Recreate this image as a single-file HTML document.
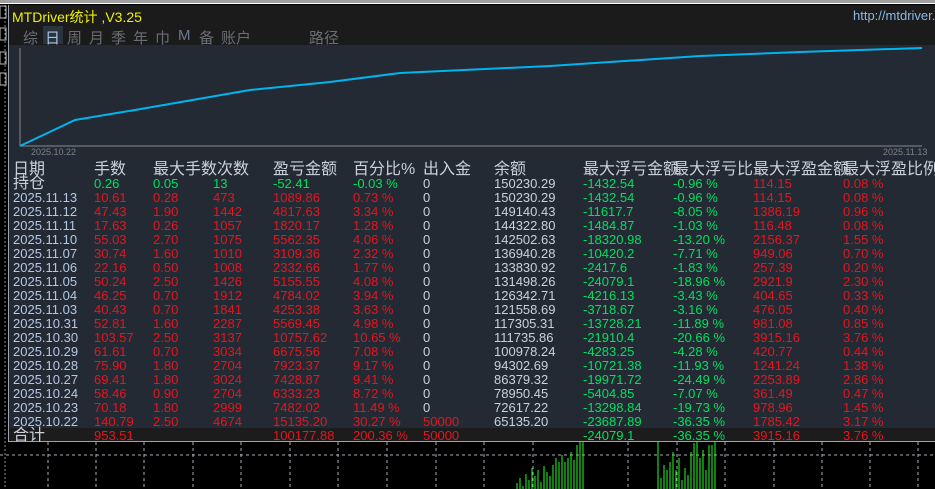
<!DOCTYPE html>
<html><head><meta charset="utf-8"><style>
*{margin:0;padding:0;box-sizing:border-box}
body{width:935px;height:489px;background:#000;position:relative;overflow:hidden;font-family:"Liberation Sans","Noto Sans CJK SC",sans-serif}
.a{position:absolute;white-space:nowrap}
.top{left:0;top:0;width:935px;height:4px;background:#a0a0a0;border-bottom:1px solid #fff}
.panel{left:8px;top:5px;width:927px;height:437px;background:#232a33;border-left:1px solid #9aa4b0;border-bottom:1px solid #9aa4b0}
.hdr{left:9px;top:5px;width:926px;height:40px;background:#1b1b1b}
.tot{left:9px;top:428px;width:926px;height:13px;background:#1c1c1c}
.r{font-size:13px;line-height:14px;color:#e8141e}
.g{color:#00e060}.d{color:#b4c8e6}.w{color:#c8d2dc}
.h{font-size:16px;line-height:16px;color:#c8d2dc;top:162px}
.tab{font-size:15px;color:#6a6e74;top:27px}
</style></head><body>
<div class="a top"></div>
<div class="a panel"></div>
<div class="a hdr"></div>
<div class="a tot"></div>
<svg class="a" style="left:0;top:0" width="935" height="489">
<line x1="5" y1="5" x2="5" y2="489" stroke="#888" stroke-dasharray="2,2"/>
<rect x="0" y="6" width="6" height="12" fill="none" stroke="#bbb"/>
<rect x="0" y="28" width="6" height="12" fill="none" stroke="#bbb"/>
<rect x="0" y="52" width="6" height="12" fill="none" stroke="#bbb"/>
<rect x="0" y="73" width="6" height="12" fill="none" stroke="#bbb"/>
<line x1="20" y1="48" x2="20" y2="146" stroke="#888"/>
<line x1="20" y1="146" x2="922" y2="146" stroke="#888"/>
<polyline points="20,146 75,120 135,110 250,90 330,82 400,73 550,66 700,56 800,52 922,48" fill="none" stroke="#00b4f0" stroke-width="2"/>
<line x1="0" y1="455" x2="935" y2="455" stroke="#aab" stroke-dasharray="3,3"/>
<g stroke="#aab" stroke-dasharray="3,3">
<line x1="48" y1="442" x2="48" y2="489"/><line x1="96" y1="442" x2="96" y2="489"/><line x1="144" y1="442" x2="144" y2="489"/><line x1="193" y1="442" x2="193" y2="489"/><line x1="241" y1="442" x2="241" y2="489"/><line x1="290" y1="442" x2="290" y2="489"/><line x1="338" y1="442" x2="338" y2="489"/><line x1="387" y1="442" x2="387" y2="489"/><line x1="436" y1="442" x2="436" y2="489"/><line x1="484" y1="442" x2="484" y2="489"/><line x1="533" y1="442" x2="533" y2="489"/><line x1="580" y1="442" x2="580" y2="489"/><line x1="628" y1="442" x2="628" y2="489"/><line x1="677" y1="442" x2="677" y2="489"/><line x1="725" y1="442" x2="725" y2="489"/><line x1="774" y1="442" x2="774" y2="489"/><line x1="822" y1="442" x2="822" y2="489"/><line x1="870" y1="442" x2="870" y2="489"/><line x1="918" y1="442" x2="918" y2="489"/>
</g>
<g stroke="#20ff20" stroke-width="1">
<path d="M517 489V483M520 489V478M523 489V486M526 489V474M529 489V480M532 489V468M535 489V476M538 489V470M541 489V482M544 489V466M547 489V472M550 489V476M553 489V465M556 489V458M559 489V462M562 489V455M565 489V462M568 489V458M571 489V452M574 489V460M577 489V445M580 489V442M583 489V442"/>
<path d="M658 489V442M661 489V478M664 489V465M667 489V470M670 489V462M673 489V452M676 489V470M679 489V458M682 489V480M685 489V468M688 489V475M691 489V452M694 489V443M697 489V442M700 489V458M703 489V450M706 489V470M709 489V445M712 489V445M715 489V442"/>
</g>
</svg>
<div class="a" style="left:12px;top:7px;font-size:14px;color:#f0f000">MTDriver统计 ,V3.25</div>
<div class="a" style="left:853px;top:8px;font-size:13px;color:#8ab8e8">http://mtdriver.</div>
<div class="a tab" style="left:23px">综</div>
<div class="a" style="left:43px;top:26px;width:20px;height:18px;background:#2a3340"></div>
<div class="a tab" style="left:45px;color:#a8c4e0">日</div>
<div class="a tab" style="left:67px">周</div>
<div class="a tab" style="left:89px">月</div>
<div class="a tab" style="left:111px">季</div>
<div class="a tab" style="left:133px">年</div>
<div class="a tab" style="left:155px">巾</div>
<div class="a tab" style="left:178px;color:#6a7a90">M</div>
<div class="a tab" style="left:199px">备</div>
<div class="a tab" style="left:221px">账户</div>
<div class="a tab" style="left:309px">路径</div>
<div class="a" style="left:31px;top:147px;font-size:9px;color:#7a8290">2025.10.22</div>
<div class="a" style="left:883px;top:147px;font-size:9px;color:#7a8290">2025.11.13</div>
<div class="a h" style="left:13px">日期</div><div class="a h" style="left:94px">手数</div><div class="a h" style="left:153px">最大手数次数</div><div class="a h" style="left:273px">盈亏金额</div><div class="a h" style="left:353px">百分比%</div><div class="a h" style="left:423px">出入金</div><div class="a h" style="left:494px">余额</div><div class="a h" style="left:583px">最大浮亏金额</div><div class="a h" style="left:673px">最大浮亏比</div><div class="a h" style="left:753px">最大浮盈金额</div><div class="a h" style="left:843px">最大浮盈比例</div>
<div id="t"></div>
<div class="a" style="left:13px;top:176px;font-size:16px;line-height:16px;color:#c8d2dc">持仓</div>
<div class="a r g" style="left:94px;top:177px">0.26</div><div class="a r g" style="left:153px;top:177px">0.05</div><div class="a r g" style="left:213px;top:177px">13</div><div class="a r g" style="left:273px;top:177px">-52.41</div><div class="a r g" style="left:353px;top:177px">-0.03 %</div><div class="a r w" style="left:423px;top:177px">0</div><div class="a r w" style="left:494px;top:177px">150230.29</div><div class="a r g" style="left:583px;top:177px">-1432.54</div><div class="a r g" style="left:673px;top:177px">-0.96 %</div><div class="a r" style="left:753px;top:177px">114.15</div><div class="a r" style="left:843px;top:177px">0.08 %</div>
<script>
var R=[["2025.11.13","10.61","0.28","473","1089.86","0.73 %","0","150230.29","-1432.54","-0.96 %","114.15","0.08 %"],
["2025.11.12","47.43","1.90","1442","4817.63","3.34 %","0","149140.43","-11617.7","-8.05 %","1386.19","0.96 %"],
["2025.11.11","17.63","0.26","1057","1820.17","1.28 %","0","144322.80","-1484.87","-1.03 %","116.48","0.08 %"],
["2025.11.10","55.03","2.70","1075","5562.35","4.06 %","0","142502.63","-18320.98","-13.20 %","2156.37","1.55 %"],
["2025.11.07","30.74","1.60","1010","3109.36","2.32 %","0","136940.28","-10420.2","-7.71 %","949.06","0.70 %"],
["2025.11.06","22.16","0.50","1008","2332.66","1.77 %","0","133830.92","-2417.6","-1.83 %","257.39","0.20 %"],
["2025.11.05","50.24","2.50","1426","5155.55","4.08 %","0","131498.26","-24079.1","-18.96 %","2921.9","2.30 %"],
["2025.11.04","46.25","0.70","1912","4784.02","3.94 %","0","126342.71","-4216.13","-3.43 %","404.65","0.33 %"],
["2025.11.03","40.43","0.70","1841","4253.38","3.63 %","0","121558.69","-3718.67","-3.16 %","476.05","0.40 %"],
["2025.10.31","52.81","1.60","2287","5569.45","4.98 %","0","117305.31","-13728.21","-11.89 %","981.08","0.85 %"],
["2025.10.30","103.57","2.50","3137","10757.62","10.65 %","0","111735.86","-21910.4","-20.66 %","3915.16","3.76 %"],
["2025.10.29","61.61","0.70","3034","6675.56","7.08 %","0","100978.24","-4283.25","-4.28 %","420.77","0.44 %"],
["2025.10.28","75.90","1.80","2704","7923.37","9.17 %","0","94302.69","-10721.38","-11.93 %","1241.24","1.38 %"],
["2025.10.27","69.41","1.80","3024","7428.87","9.41 %","0","86379.32","-19971.72","-24.49 %","2253.89","2.86 %"],
["2025.10.24","58.46","0.90","2704","6333.23","8.72 %","0","78950.45","-5404.85","-7.07 %","361.49","0.47 %"],
["2025.10.23","70.18","1.80","2999","7482.02","11.49 %","0","72617.22","-13298.84","-19.73 %","978.96","1.45 %"],
["2025.10.22","140.79","2.50","4674","15135.20","30.27 %","50000","65135.20","-23687.89","-36.35 %","1785.42","3.17 %"],
["合计","953.51","","","100177.88","200.36 %","50000","","-24079.1","-36.35 %","3915.16","3.76 %"]];
var X=[13,94,153,213,273,353,423,494,583,673,753,843],h="";
R.forEach(function(r,i){var y=191+i*14;r.forEach(function(v,j){var c="r";if(j==0)c="r d";else if(j==6&&v=="0")c="r w";else if(j==7)c="r w";else if(j==8||j==9)c="r g";
var st=(j==0&&i==17)?"font-size:16px;color:#c8d2dc;":"";h+='<div class="a '+c+'" style="'+st+'left:'+X[j]+'px;top:'+y+'px">'+v+'</div>';});});
document.getElementById("t").innerHTML=h;
</script>
</body></html>
